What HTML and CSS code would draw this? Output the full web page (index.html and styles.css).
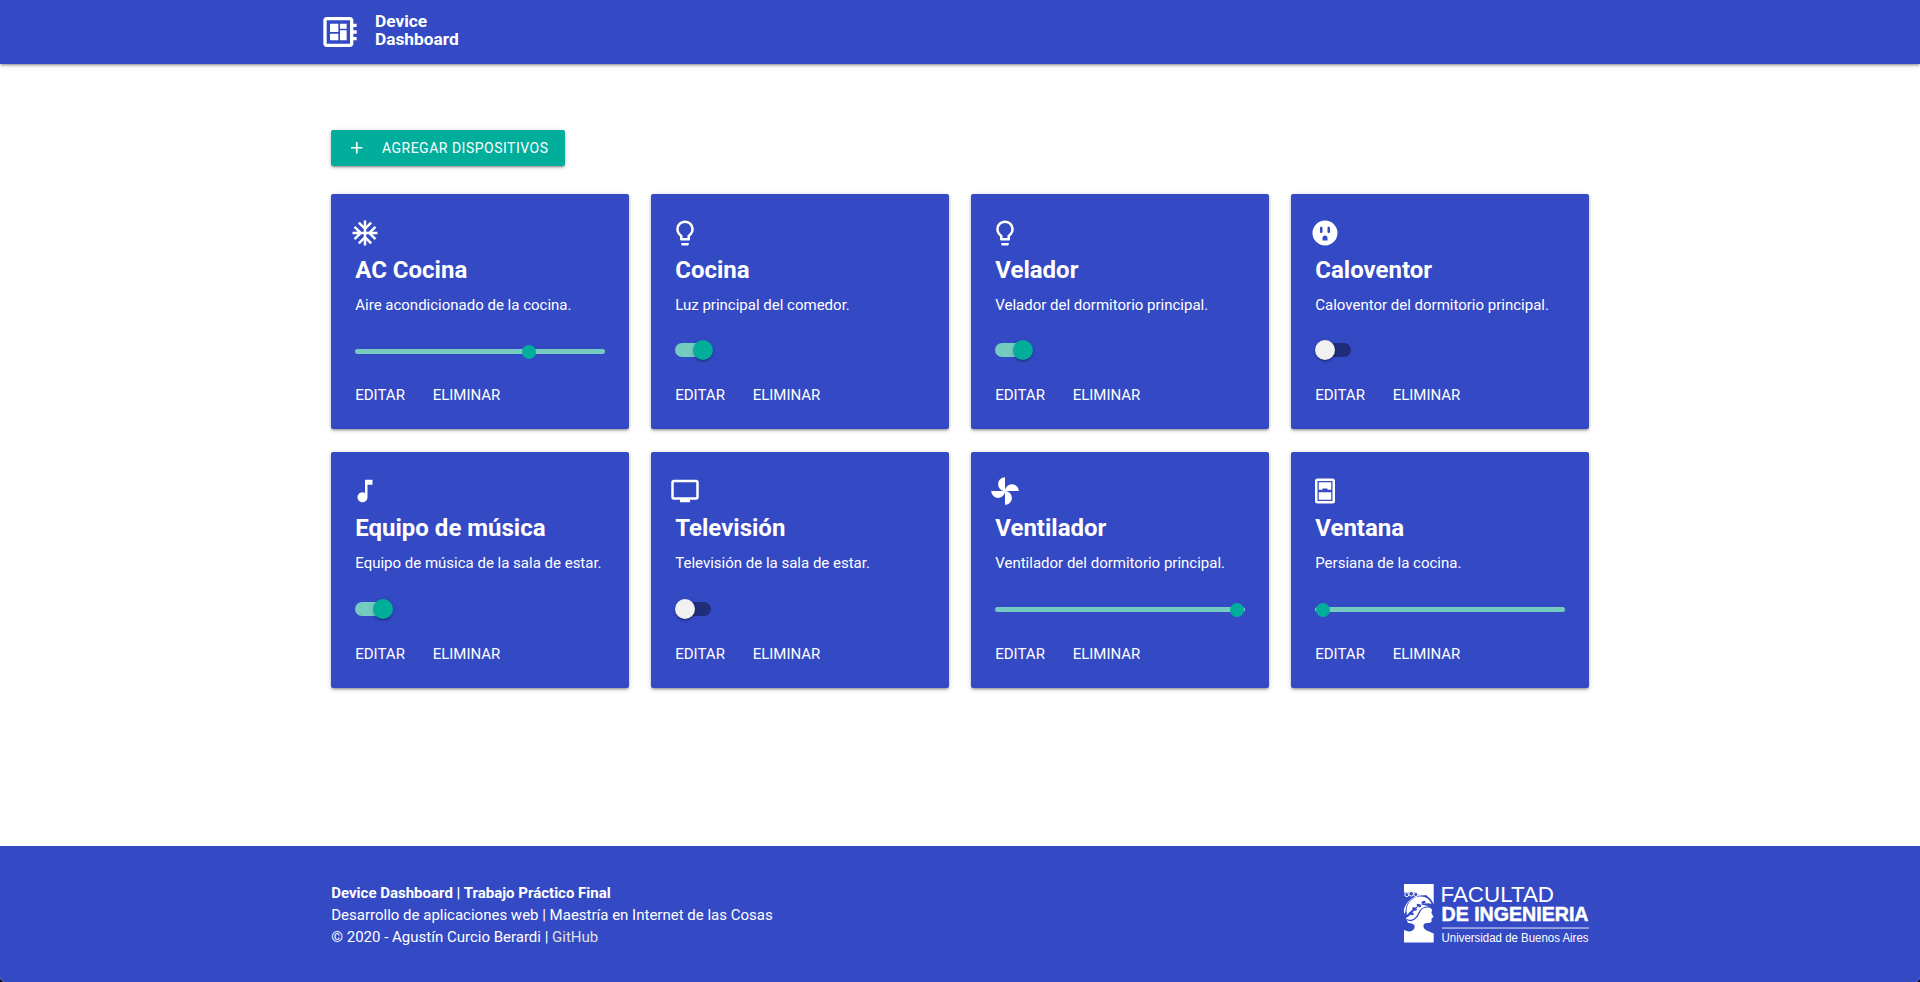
FILE: index.html
```html
<!DOCTYPE html>
<html lang="es">
<head>
<meta charset="utf-8">
<title>Device Dashboard</title>
<link rel="stylesheet" href="styles.css">
</head>
<body>
<svg class="sprite" aria-hidden="true">
  <symbol id="i-board" viewBox="0 0 24 24"><path d="M22 9V7h-2V5c0-1.100-.9-2-2-2H4c-1.100 0-2 .9-2 2v14c0 1.100.9 2 2 2h14c1.100 0 2-.9 2-2v-2h2v-2h-2v-2h2v-2h-2V9h2zm-4 10H4V5h14v14zM6 13h5v4H6zM12 7h4v3h-4zM6 7h5v5H6zM12 11h4v6h-4z"/></symbol>
  <symbol id="i-add" viewBox="0 0 24 24"><path d="M19 13h-6v6h-2v-6H5v-2h6V5h2v6h6v2z"/></symbol>
  <symbol id="i-snow" viewBox="0 0 24 24"><path d="M22 11h-4.170l3.240-3.240-1.410-1.420L15 11h-2V9l4.660-4.660-1.420-1.410L13 6.170V2h-2v4.170L7.760 2.930 6.340 4.340 11 9v2H9L4.340 6.340 2.930 7.760 6.170 11H2v2h4.170l-3.240 3.240 1.410 1.420L9 13h2v2l-4.660 4.660 1.420 1.410L11 17.830V22h2v-4.170l3.240 3.240 1.420-1.410L13 15v-2h2l4.660 4.660 1.410-1.420L17.830 13H22z"/></symbol>
  <symbol id="i-bulb" viewBox="0 0 24 24"><path d="M9 21c0 .55.45 1 1 1h4c.55 0 1-.45 1-1v-1H9v1zm3-19C8.140 2 5 5.140 5 9c0 2.380 1.190 4.470 3 5.740V17c0 .55.45 1 1 1h6c.55 0 1-.45 1-1v-2.260c1.810-1.270 3-3.360 3-5.740 0-3.860-3.140-7-7-7zm2.850 11.100l-.85.6V16h-4v-2.300l-.85-.6C7.800 12.160 7 10.630 7 9c0-2.760 2.240-5 5-5s5 2.240 5 5c0 1.630-.8 3.160-2.150 4.100z"/></symbol>
  <symbol id="i-outlet" viewBox="0 0 24 24"><path fill-rule="evenodd" d="M12 2a10 10 0 1 0 0 20 10 10 0 0 0 0-20zM9 12c-.55 0-1-.45-1-1V8c0-.55.45-1 1-1s1 .45 1 1v3c0 .55-.45 1-1 1zM14 18h-4v-2c0-1.100.9-2 2-2s2 .9 2 2v2zM16 11c0 .55-.45 1-1 1s-1-.45-1-1V8c0-.55.45-1 1-1s1 .45 1 1v3z"/></symbol>
  <symbol id="i-note" viewBox="0 0 24 24"><path d="M12 3v10.550c-.59-.34-1.270-.55-2-.55-2.210 0-4 1.790-4 4s1.790 4 4 4 4-1.790 4-4V7h4V3h-6z"/></symbol>
  <symbol id="i-tv" viewBox="0 0 24 24"><path d="M21 3H3c-1.100 0-2 .9-2 2v12c0 1.100.9 2 2 2h5v2h8v-2h5c1.100 0 2-.9 2-2V5c0-1.100-.9-2-2-2zm0 14H3V5h18v12z"/></symbol>
  <symbol id="i-fan" viewBox="0 0 24 24"><path d="M12 12c0-3 2.500-5.500 5.500-5.500S23 9 23 12H12zm0 0c0 3-2.500 5.500-5.500 5.500S1 15 1 12h11zm0 0c-3 0-5.500-2.500-5.500-5.500S9 1 12 1v11zm0 0c3 0 5.500 2.500 5.500 5.500S15 23 12 23V12z"/></symbol>
  <symbol id="i-window" viewBox="0 0 24 24"><path fill-rule="evenodd" d="M18 2H6a2 2 0 0 0-2 2v16a2 2 0 0 0 2 2h12a2 2 0 0 0 2-2V4a2 2 0 0 0-2-2zM18 4v16H6V4zM7 5h10v6h-3v-1h-4v1H7zM7 13h10v6H7z"/></symbol>
</svg>
<div class="page">
  <header class="topbar">
    <div class="container brand">
      <svg class="brand-icon"><use href="#i-board"/></svg>
      <div class="brand-name">Device<br>Dashboard</div>
    </div>
  </header>

  <main class="container content">
    <button class="add-button"><svg class="add-icon"><use href="#i-add"/></svg>Agregar dispositivos</button>
    <section class="grid">
      <article class="card">
        <svg class="card-icon"><use href="#i-snow"/></svg>
        <h2 class="card-title">AC Cocina</h2>
        <p class="card-text">Aire acondicionado de la cocina.</p>
        <div class="control"><div class="slider"><span class="knob" style="margin-left:167px"></span></div></div>
        <div class="actions"><a>Editar</a> <a>Eliminar</a></div>
      </article>
      <article class="card">
        <svg class="card-icon"><use href="#i-bulb"/></svg>
        <h2 class="card-title">Cocina</h2>
        <p class="card-text">Luz principal del comedor.</p>
        <div class="control"><div class="switch on"><span class="lever"></span></div></div>
        <div class="actions"><a>Editar</a> <a>Eliminar</a></div>
      </article>
      <article class="card">
        <svg class="card-icon"><use href="#i-bulb"/></svg>
        <h2 class="card-title">Velador</h2>
        <p class="card-text">Velador del dormitorio principal.</p>
        <div class="control"><div class="switch on"><span class="lever"></span></div></div>
        <div class="actions"><a>Editar</a> <a>Eliminar</a></div>
      </article>
      <article class="card">
        <svg class="card-icon"><use href="#i-outlet"/></svg>
        <h2 class="card-title">Caloventor</h2>
        <p class="card-text">Caloventor del dormitorio principal.</p>
        <div class="control"><div class="switch"><span class="lever"></span></div></div>
        <div class="actions"><a>Editar</a> <a>Eliminar</a></div>
      </article>
      <article class="card">
        <svg class="card-icon"><use href="#i-note"/></svg>
        <h2 class="card-title">Equipo de música</h2>
        <p class="card-text">Equipo de música de la sala de estar.</p>
        <div class="control"><div class="switch on"><span class="lever"></span></div></div>
        <div class="actions"><a>Editar</a> <a>Eliminar</a></div>
      </article>
      <article class="card">
        <svg class="card-icon"><use href="#i-tv"/></svg>
        <h2 class="card-title">Televisión</h2>
        <p class="card-text">Televisión de la sala de estar.</p>
        <div class="control"><div class="switch"><span class="lever"></span></div></div>
        <div class="actions"><a>Editar</a> <a>Eliminar</a></div>
      </article>
      <article class="card">
        <svg class="card-icon"><use href="#i-fan"/></svg>
        <h2 class="card-title">Ventilador</h2>
        <p class="card-text">Ventilador del dormitorio principal.</p>
        <div class="control"><div class="slider"><span class="knob" style="margin-left:234.5px"></span></div></div>
        <div class="actions"><a>Editar</a> <a>Eliminar</a></div>
      </article>
      <article class="card">
        <svg class="card-icon"><use href="#i-window"/></svg>
        <h2 class="card-title">Ventana</h2>
        <p class="card-text">Persiana de la cocina.</p>
        <div class="control"><div class="slider"><span class="knob" style="margin-left:0.5px"></span></div></div>
        <div class="actions"><a>Editar</a> <a>Eliminar</a></div>
      </article>
    </section>
  </main>

  <footer class="footer">
    <div class="container footer-row">
      <div class="credits">
        <b>Device Dashboard | Trabajo Práctico Final</b><br>
        Desarrollo de aplicaciones web | Maestría en Internet de las Cosas<br>
        © 2020 - Agustín Curcio Berardi | <a class="link">GitHub</a>
      </div>
      <svg class="faculty" viewBox="0 0 185 60">
        <path class="ink" d="M0 0H29.700V21L27.500 17.500C26 14 22 11 16.500 11.600C12 12 5 16 2.500 22C1 26 1.500 32 0 36.500z"/>
        <path class="cut" d="M0 8.500H13L14.500 11.500C8 13 2.500 18 0 25z"/>
        <g class="rings"><circle cx="2.800" cy="10.700" r="2"/><circle cx="7.200" cy="9.800" r="2.300"/><circle cx="11.800" cy="10.500" r="2"/></g>
        <path class="cut" d="M14 12.500L22 11L27 15.500L29.700 20V26L26 21C18 21 13 29 10 37L14 45L0 46V30z"/>
        <path class="ink" d="M3 31C1 22 6 14 15 12.500C21 11.700 26 15 27.500 20C19 17 9 24 3 31z"/>
        <path class="ink" d="M2 34C7 32 10 25 17 20.500L24 22L28 25.500L27.500 29L29.500 33L27.500 34.500V38C24 40 21 38 19.500 41C19 46 23 46.500 29.700 49.500V58.500H0V46C4 48 8 48 10 45C12.500 41 8.500 39 4 39z"/>
        <path class="line" d="M3 35.500C8 38.500 13 34 15 29S20 22 27 23"/>
        <g class="cut"><ellipse cx="7.500" cy="29.500" rx="2.500" ry="1.500" transform="rotate(25 7.500 29.500)"/><ellipse cx="10.500" cy="25" rx="2.500" ry="1.500" transform="rotate(20 10.500 25)"/><ellipse cx="15" cy="21.500" rx="2.500" ry="1.500" transform="rotate(25 15 21.500)"/><ellipse cx="19.500" cy="18.300" rx="2.200" ry="1.400" transform="rotate(-20 19.500 18.300)"/></g>
        <text class="fac-light" x="36.500" y="18" textLength="113.500" lengthAdjust="spacingAndGlyphs">FACULTAD</text>
        <text class="fac-bold" x="37.500" y="36.800" textLength="147" lengthAdjust="spacingAndGlyphs">DE INGENIERIA</text>
        <rect class="rule" x="38" y="43.300" width="147" height="1.500"/>
        <text class="fac-small" x="37.500" y="57.700" textLength="147" lengthAdjust="spacingAndGlyphs">Universidad de Buenos Aires</text>
      </svg>
    </div>
  </footer>
</div>
</body>
</html>
```
FILE: styles.css
```css
:root {
  --blue: #3449c4;
  --teal: #00ae9b;
  --teal-soft: #76cbc1;
  --lift: 0 2px 2px 0 rgba(0,0,0,.14), 0 3px 1px -2px rgba(0,0,0,.12), 0 1px 5px 0 rgba(0,0,0,.2);
}
* { box-sizing: border-box; }
html { background: #000; }
body { margin: 0; font: 15px/22.5px Roboto, "Liberation Sans", sans-serif; color: #fff; }
.sprite { position: absolute; width: 0; height: 0; }
svg { fill: currentColor; }
.page { display: flex; flex-direction: column; height: 982px; background: #fff; border-radius: 0 0 5px 5px; overflow: hidden; }
.container { width: 1280px; margin: 0 auto; padding: 0 11.25px; }

.topbar { height: 64px; flex: none; background: var(--blue); box-shadow: var(--lift); }
.brand { display: flex; height: 64px; padding: 12px 0 0; }
.brand-icon { width: 40px; height: 40px; margin-right: 15px; }
.brand-name { font-size: 17.3px; line-height: 18px; font-weight: 700; }

.content { flex: 1; padding-top: 66px; }
.add-button { display: flex; align-items: center; height: 36px; padding: 0 16.8px 0 16.2px; border: 0; border-radius: 2px; background: var(--teal); color: #fff; font: 14px/36px Roboto, "Liberation Sans", sans-serif; letter-spacing: .5px; text-transform: uppercase; box-shadow: var(--lift); }
.add-icon { width: 19.5px; height: 19.5px; margin-right: 15px; }
.grid { display: grid; grid-template-columns: repeat(4, 297.5px); gap: 22.5px; margin-top: 27.86px; }
.card { height: 235.62px; padding: 24px 24px 0; border-radius: 2px; background: var(--blue); box-shadow: var(--lift); }
.card-icon { display: block; width: 30px; height: 30px; margin: 0 0 6px -5px; }
.card-title { margin: 0 0 8px; font-size: 24px; line-height: 32px; font-weight: 700; }
.card-text { margin: 0; white-space: nowrap; }
.control { display: flex; align-items: center; height: 68.1px; }
.slider { display: flex; align-items: center; width: 100%; height: 5px; margin-top: 2px; border-radius: 2.5px; background: var(--teal-soft); }
.knob { width: 14px; height: 14px; flex: none; margin-top: 1px; border-radius: 50%; background: var(--teal); }
.switch { display: flex; align-items: center; width: 36px; height: 14px; margin-top: .1px; border-radius: 15px; background: rgba(0,0,0,.38); }
.lever { width: 20px; height: 20px; flex: none; border-radius: 50%; background: #f1f1f1; box-shadow: 0 3px 1px -2px rgba(0,0,0,.2), 0 2px 2px 0 rgba(0,0,0,.14), 0 1px 5px 0 rgba(0,0,0,.12); }
.switch.on { background: var(--teal-soft); }
.on .lever { margin-left: 18px; background: var(--teal); }
.actions { text-transform: uppercase; }
.actions a { margin-right: 24px; }

.footer { height: 136px; flex: none; padding-top: 36px; background: var(--blue); }
.footer-row { display: flex; justify-content: space-between; }
.credits { line-height: 22px; }
.link { color: #e0e0e0; }
.faculty { width: 185px; height: 60px; margin-top: 2px; overflow: visible; }
.ink { fill: #fff; }
.cut { fill: var(--blue); }
.rings { fill: var(--blue); stroke: #fff; stroke-width: 1; }
.line { fill: none; stroke: var(--blue); stroke-width: 1.3; }
.faculty text { font-family: "Liberation Sans", Arial, sans-serif; }
.fac-light { font-size: 22.5px; }
.fac-bold { font-size: 19.5px; font-weight: 700; stroke: #fff; stroke-width: .5px; }
.fac-small { font-size: 12px; }
.rule { opacity: .6; }
```
